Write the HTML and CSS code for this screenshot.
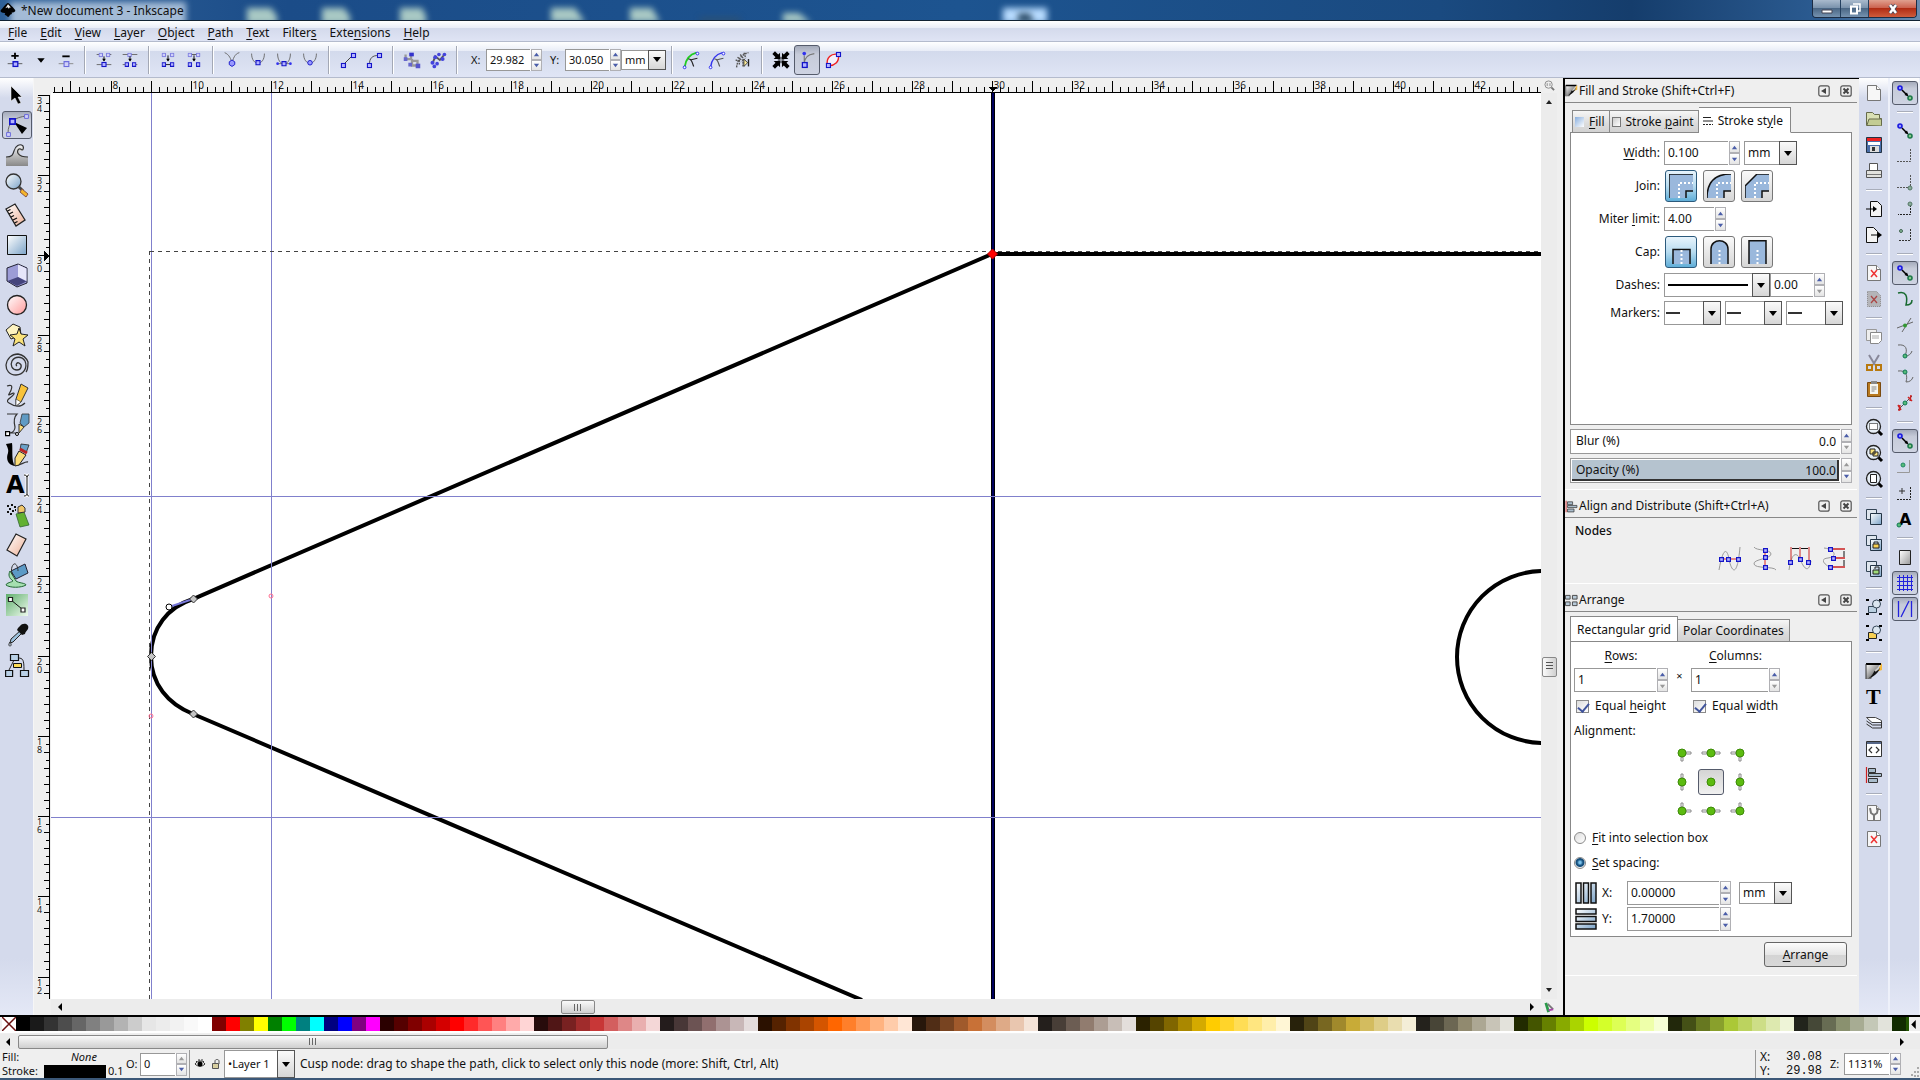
FILE: index.html
```html
<!DOCTYPE html>
<html lang="en">
<head>
  <meta charset="utf-8">
  <title>*New document 3 - Inkscape</title>
  <link rel="stylesheet" href="styles.css">
</head>
<body>
  <!-- shared icon shapes -->
  <svg class="sprite" aria-hidden="true">
    <defs>
      <linearGradient id="blueGrad" x1="0" y1="0" x2="1" y2="1"><stop offset="0" stop-color="#fff"/><stop offset="1" stop-color="#7ba3c8"/></linearGradient>
      <linearGradient id="pinkGrad" x1="0" y1="0" x2="1" y2="1"><stop offset="0" stop-color="#fff"/><stop offset="1" stop-color="#ff9a9a"/></linearGradient>
      <linearGradient id="skinGrad" x1="0" y1="0" x2="1" y2="1"><stop offset="0" stop-color="#fff"/><stop offset="1" stop-color="#eeb096"/></linearGradient>
      <linearGradient id="grayGrad" x1="0" y1="0" x2="0" y2="1"><stop offset="0" stop-color="#eee"/><stop offset="1" stop-color="#888"/></linearGradient>
      <linearGradient id="sheetGrad" x1="0" y1="0" x2="1" y2="1"><stop offset="0" stop-color="#fff"/><stop offset="1" stop-color="#999"/></linearGradient>
      <linearGradient id="greenGrad" x1="0" y1="0" x2="1" y2="1"><stop offset="0" stop-color="#5fae6c"/><stop offset="1" stop-color="#eefaee"/></linearGradient>
      <linearGradient id="inkGrad" x1="0" y1="0" x2="1" y2="1"><stop offset="0" stop-color="#fff"/><stop offset=".5" stop-color="#999"/><stop offset="1" stop-color="#000"/></linearGradient>
    </defs>
    <symbol id="nd" viewBox="0 0 6 6"><path d="M.7.7h4.6v4.6H.7z" fill="#b4b4ff" stroke="#1414c8" stroke-width="1.4"/></symbol>
    <symbol id="ndl" viewBox="0 0 6 6"><path d="M.7.7h4.6v4.6H.7z" fill="#d0d0f8" stroke="#6c6cdc" stroke-width="1.2"/></symbol>
    <symbol id="page" viewBox="0 0 24 24"><path d="M5.5 4.5h9l4 4v11h-13z" fill="#f7f7f7" stroke="#777"/><path d="M14.5 4.5v4h4" fill="#fff" stroke="#777"/></symbol>
    <symbol id="snap" viewBox="0 0 24 24"><circle cx="7" cy="7" r="2" fill="#99f" stroke="#1a1ae0" stroke-width="1.6"/><circle cx="17" cy="17" r="2" fill="#8c8" stroke="#1f7a4c" stroke-width="1.6"/><path d="M9 9l5 5" stroke="#000" stroke-width="1.5"/><path d="M15.5 15.5l-4-1.5 2.5-2.5z"/></symbol>
    <symbol id="lens" viewBox="0 0 24 24"><path d="M15 15l5 5" stroke="#000" stroke-width="3"/><circle cx="11.5" cy="11.5" r="7" fill="#e6eef6" stroke="#222" stroke-width="1.3"/></symbol>
    <symbol id="two" viewBox="0 0 24 24"><path d="M4.5 4.5h10v10h-10z" fill="#dfe6ee" stroke="#345"/><path d="M8.5 8.500h11v11h-11z" fill="url(#blueGrad)" stroke="#234"/></symbol>
    <symbol id="brush" viewBox="0 0 24 24"><path d="M4 5h14L9 20H4z" fill="url(#inkGrad)"/><path d="M4 4h15v2H4z"/><path d="M4 5v15" stroke="#333"/><path d="M20 4v7l-6 2z" fill="#f4b93c"/><path d="M18 9c-2 6-7 9-13 11 5-2 6-6 8-9z" fill="#111"/><path d="M13 12l4-3" stroke="#ccc" stroke-width="2"/></symbol>
    <symbol id="align" viewBox="0 0 24 24"><path d="M4.5 4v16" stroke="#c22" stroke-width="1.2"/><path d="M6.5 5.500h7v4h-7zM6.5 10.500h13v3h-13zM6.5 15.500h9v4h-9z" fill="#a9bccb" stroke="#333"/></symbol>
    <symbol id="up" viewBox="0 0 8 8"><path d="M1 6l3-4 3 4z" fill="currentColor"/></symbol>
    <symbol id="down" viewBox="0 0 8 8"><path d="M1 2l3 4 3-4z" fill="currentColor"/></symbol>
    <symbol id="float" viewBox="0 0 12 12"><rect x=".8" y=".8" width="10.4" height="10.4" rx="2" fill="none" stroke="#555" stroke-width="1.2"/><path d="M3 6l5-3v6z" fill="#444"/></symbol>
    <symbol id="shut" viewBox="0 0 12 12"><rect x=".8" y=".8" width="10.4" height="10.4" rx="2" fill="none" stroke="#555" stroke-width="1.2"/><path d="M3.5 3.5l5 5m0-5l-5 5" stroke="#444" stroke-width="2"/></symbol>
  </svg>

  <header class="titlebar">
    <svg class="desktop" aria-hidden="true">
      <g class="blurred">
        <rect x="10" y="2" width="176" height="24"/>
        <path d="M247 8h24l6 8v8h-30zM322 8h22l6 8v8h-28zM400 8h22l4 8v8h-26zM551 8h24l10 14h-34zM630 8h22l8 14h-30zM783 13h16l12 10h-28z"/>
        <path d="M1003 8h44v15h-44z" fill="#b8dcff"/>
      </g>
      <path class="dim" d="M1018 13h12l4 10h-16zM700 18h40v4h-40z"/>
    </svg>
    <svg class="logo" viewBox="0 0 18 18"><path d="M9 1c1 0 7 6 8 8s-2 3-4 3c1 1 0 2-1 2s-1 2-3 3c-1-1-2-2-4-3 2-1 0-2-2-2s-3-2-2-3 6-8 8-8z"/><path d="M9 2.5l3.5 4-1.5-.5-1 1.5L8.500 6 6 7z" fill="#eee"/></svg>
    <h1>*New document 3 - Inkscape</h1>
    <div class="win-buttons">
      <button aria-label="Minimize"><svg viewBox="0 0 16 12"><path d="M3 7h10v3H3z" fill="#fff" stroke="#445"/></svg></button>
      <button aria-label="Restore"><svg viewBox="0 0 16 12"><path d="M6 1h7v7h-2" fill="none" stroke="#fff" stroke-width="1.5"/><path d="M4 3.5h6v7H4z" fill="none" stroke="#fff" stroke-width="2"/></svg></button>
      <button class="win-close" aria-label="Close"><svg viewBox="0 0 16 12"><path d="M5 2l6 8m0-8l-6 8" stroke="#445" stroke-width="4"/><path d="M5 2l6 8m0-8l-6 8" stroke="#fff" stroke-width="2.5"/></svg></button>
    </div>
  </header>

  <nav class="menubar">
    <a href="#"><u>F</u>ile</a>
    <a href="#"><u>E</u>dit</a>
    <a href="#"><u>V</u>iew</a>
    <a href="#"><u>L</u>ayer</a>
    <a href="#"><u>O</u>bject</a>
    <a href="#"><u>P</u>ath</a>
    <a href="#"><u>T</u>ext</a>
    <a href="#">Filter<u>s</u></a>
    <a href="#">Exte<u>n</u>sions</a>
    <a href="#"><u>H</u>elp</a>
  </nav>

  <div class="toolbar">
    <button aria-label="Insert node"><svg viewBox="0 0 24 24"><path d="M12 4v7M8 7.5h8" stroke="#000" stroke-width="2"/><path d="M4 16h16" stroke="#555"/><use href="#nd" x="9" y="13" width="7" height="7"/></svg></button>
    <button class="drop" aria-label="Insert options"><svg viewBox="0 0 24 24"><path d="M8 10h8l-4 5z"/></svg></button>
    <button aria-label="Delete node"><svg viewBox="0 0 24 24"><path d="M8 8h8" stroke="#000" stroke-width="2"/><path d="M4 16h16" stroke="#888"/><use href="#ndl" x="9" y="13" width="7" height="7"/></svg></button>
    <span class="sep"></span>
    <button aria-label="Join nodes"><svg viewBox="0 0 24 24"><path d="M4 6h3M17 6h3M4 17h16" stroke="#666"/><use href="#ndl" x="6" y="4" width="5" height="5"/><use href="#ndl" x="14" y="4" width="5" height="5"/><use href="#nd" x="9" y="14" width="6" height="6"/><path d="M12 8v5" stroke="#000"/><path d="M10 10.5h4l-2 3z"/></svg></button>
    <button aria-label="Break path"><svg viewBox="0 0 24 24"><path d="M4 6h16M4 17h3M17 17h3" stroke="#666"/><use href="#ndl" x="9" y="4" width="5" height="5"/><use href="#nd" x="6" y="14" width="5" height="6"/><use href="#nd" x="14" y="14" width="5" height="6"/><path d="M12 8v5" stroke="#000"/><path d="M10 10.5h4l-2 3z"/></svg></button>
    <span class="sep"></span>
    <button aria-label="Join with segment"><svg viewBox="0 0 24 24"><path d="M7 17h10" stroke="#111"/><use href="#ndl" x="5" y="4" width="5" height="5"/><use href="#ndl" x="14" y="4" width="5" height="5"/><use href="#nd" x="5" y="14" width="5" height="6"/><use href="#nd" x="14" y="14" width="5" height="6"/><path d="M12 7v6" stroke="#000"/><path d="M10 10.5h4l-2 3z"/></svg></button>
    <button aria-label="Delete segment"><svg viewBox="0 0 24 24"><path d="M7 6h10" stroke="#555"/><use href="#ndl" x="5" y="4" width="5" height="5"/><use href="#ndl" x="14" y="4" width="5" height="5"/><use href="#nd" x="5" y="14" width="5" height="6"/><use href="#nd" x="14" y="14" width="5" height="6"/><path d="M12 7v6" stroke="#000"/><path d="M10 10.5h4l-2 3z"/></svg></button>
    <span class="sep"></span>
    <button aria-label="Cusp"><svg viewBox="0 0 24 24"><path d="M4 4c5 2 7 7 8 12 1-5 3-11 8-12" fill="none" stroke="#666"/><path d="M9 14l3-2 3 2v3l-3 2-3-2z" fill="#99f" stroke="#1414c8"/></svg></button>
    <button aria-label="Smooth"><svg viewBox="0 0 24 24"><path d="M5 5c0 14 14 14 14 0" fill="none" stroke="#666"/><use href="#nd" x="9" y="12" width="6" height="6"/></svg></button>
    <button aria-label="Symmetric"><svg viewBox="0 0 24 24"><path d="M5 5c0 15 14 15 14 0M5 16h14" fill="none" stroke="#666"/><use href="#nd" x="9" y="13" width="6" height="6"/><circle cx="5" cy="16" r="1.5" fill="#33e"/><circle cx="19" cy="16" r="1.5" fill="#33e"/></svg></button>
    <button aria-label="Auto-smooth"><svg viewBox="0 0 24 24"><path d="M5 5c0 14 14 14 14 0" fill="none" stroke="#666"/><circle cx="12" cy="15" r="2.5" fill="#99f" stroke="#1414c8"/></svg></button>
    <span class="sep"></span>
    <button aria-label="Make line"><svg viewBox="0 0 24 24"><path d="M7 17L17 7" stroke="#333"/><use href="#nd" x="4" y="15" width="6" height="6"/><use href="#nd" x="15" y="4" width="6" height="6"/></svg></button>
    <button aria-label="Make curve"><svg viewBox="0 0 24 24"><path d="M7 17C7 10 10 7 17 7" fill="none" stroke="#444"/><use href="#nd" x="4" y="15" width="6" height="6"/><use href="#nd" x="15" y="4" width="6" height="6"/></svg></button>
    <span class="sep"></span>
    <button aria-label="Object to path"><svg viewBox="0 0 24 24"><path d="M5 6v5h7M11 5v6M12 11v7h6v-5h-6" fill="none" stroke="#999" stroke-width="2.5"/><path d="M9 4h5v4H9z" fill="#33c"/><path d="M3 9h4v4H3zM8 15h4v4H8z" fill="#66c"/><path d="M16 16h5v5h-5z" fill="#55c"/></svg></button>
    <button aria-label="Stroke to path"><svg viewBox="0 0 24 24"><path d="M6 16l3-8 5 4 5-6" fill="none" stroke="#555" stroke-width="2"/><g fill="#44d"><circle cx="6" cy="15" r="2.2"/><circle cx="9" cy="9" r="2.2"/><circle cx="13" cy="6" r="2"/><circle cx="19" cy="6" r="2"/><circle cx="17" cy="11" r="2.2"/><circle cx="11" cy="16" r="2"/><circle cx="8" cy="19" r="2"/></g></svg></button>
    <span class="sep"></span>
    <label for="node-x">X:</label>
    <span class="spin"><input id="node-x" type="text" value="29.982"><span class="steps"><button aria-label="Increase X"><svg><use href="#up"/></svg></button><button aria-label="Decrease X"><svg><use href="#down"/></svg></button></span></span>
    <label for="node-y">Y:</label>
    <span class="spin"><input id="node-y" type="text" value="30.050"><span class="steps"><button aria-label="Increase Y"><svg><use href="#up"/></svg></button><button aria-label="Decrease Y"><svg><use href="#down"/></svg></button></span></span>
    <span class="combo unit"><select aria-label="Units"><option>mm</option></select><i></i></span>
    <span class="sep"></span>
    <button aria-label="Edit clip"><svg viewBox="0 0 24 24"><path d="M5 20C6 12 10 6 18 4" fill="none" stroke="#2c2" stroke-width="2"/><path d="M9 11c4-1 4 4 6 8M11 12l8-2" fill="none" stroke="#222" stroke-width="1.2"/><circle cx="5" cy="20" r="1.5" fill="#fff" stroke="#22e"/><circle cx="19" cy="5" r="1.5" fill="#fff" stroke="#22e"/></svg></button>
    <button aria-label="Edit mask"><svg viewBox="0 0 24 24"><path d="M5 20C6 12 10 6 18 4" fill="none" stroke="#33e" stroke-width="1.5"/><path d="M9 11c4-1 4 4 6 8M11 12l8-2" fill="none" stroke="#555" stroke-width="1.2"/><circle cx="5" cy="20" r="1.5" fill="#fff" stroke="#22e"/><circle cx="19" cy="5" r="1.5" fill="#fff" stroke="#22e"/></svg></button>
    <button aria-label="Edit path effect"><svg viewBox="0 0 24 24"><path d="M5 20C6 12 10 6 18 4M4 12l6 2M6 9l6 4M9 6l4 5M13 4l2 6M8 12v6M12 11v8" fill="none" stroke="#555" stroke-width="1.5" stroke-dasharray="2 1"/><path d="M13 11v8l4-4z" fill="#fe9" stroke="#333"/><path d="M18 11v8" stroke="#222" stroke-width="1.5"/></svg></button>
    <span class="sep"></span>
    <button aria-label="Show transform handles"><svg viewBox="0 0 24 24"><path d="M4 4l16 16M20 4L4 20" stroke="#000" stroke-width="4"/><path d="M11 4v7H4zM13 4v7h7zM11 20v-7H4zM13 20v-7h7z"/><path d="M12 4v16M4 12h16" stroke="#d8deef"/></svg></button>
    <button class="active" aria-label="Show handles"><svg viewBox="0 0 24 24"><path d="M9 7v9M9 16c0-6 4-10 11-11" fill="none" stroke="#777" stroke-width="1.2"/><circle cx="9" cy="5" r="2" fill="#33e"/><use href="#nd" x="6" y="14" width="7" height="7"/></svg></button>
    <button aria-label="Show outline"><svg viewBox="0 0 24 24"><path d="M6 18C4 10 10 4 18 6c1 8-4 13-12 12z" fill="#f4f0fa" stroke="#e22" stroke-width="1.5"/><use href="#nd" x="4" y="15" width="6" height="6"/><use href="#nd" x="15" y="3" width="6" height="6"/></svg></button>
  </div>

  <main class="workspace">
    <div class="toolbox">
      <button aria-label="Select"><svg viewBox="0 0 24 24"><path d="M6 3v15l4-3 3 6 3-1-3-6h4z" stroke="#fff" stroke-width=".5"/></svg></button>
      <button class="active" aria-label="Edit nodes"><svg viewBox="0 0 24 24"><path d="M3 20C3 10 9 4 22 3" fill="none" stroke="#666"/><path d="M9 9l13 6-5 6z"/><use href="#nd" x="4" y="5" width="7" height="7"/><use href="#ndl" x="1" y="19" width="5" height="5"/><use href="#ndl" x="19" y="1" width="5" height="5"/></svg></button>
      <button aria-label="Tweak"><svg viewBox="0 0 24 24"><path d="M1 14c6 0 8-1 9-6 1-4 6-7 8-4 2 2 0 5-2 4-3 0-2 6 7 6v9H1z" fill="url(#grayGrad)"/><path d="M1 14c6 0 7-2 8-6 1-5 6-8 9-5 1 2 0 4-1 4s-1-2-3-1c-3 2-2 8 9 8" fill="none" stroke="#333" stroke-width="1.2"/></svg></button>
      <button aria-label="Zoom"><svg viewBox="0 0 24 24"><path d="M14 14l4 4" stroke="#444" stroke-width="3"/><path d="M17 16l6 5-2 3-6-5z" fill="#f6b62a" stroke="#854"/><circle cx="8.5" cy="8.5" r="7.5" fill="url(#blueGrad)" stroke="#333" stroke-width="1.3"/></svg></button>
      <button aria-label="Measure"><svg viewBox="0 0 24 24"><path d="M1 6l9-5 10 16-9 6z" fill="url(#skinGrad)" stroke="#222" stroke-width="1.3"/><path d="M2.5 8l3-1.500M4 11l4-2M6 14l3-1.500M8 17l4-2M9.500 20l3-1.500" stroke="#111" stroke-width="1.3"/></svg></button>
      <button aria-label="Rectangle"><svg viewBox="0 0 24 24"><path d="M2.5 2.5h19v19h-19z" fill="url(#blueGrad)" stroke="#111"/></svg></button>
      <button aria-label="3D box"><svg viewBox="0 0 24 24"><path d="M2 5l11-4 9 4v15l-10 4-10-6z" fill="#9c9cd6" stroke="#223"/><path d="M13 1.500l8.500 4V18L13 14z" fill="#e6e6fa"/><path d="M2.500 18l10.500-4 8.500 4.500L12 23z" fill="#44447c"/></svg></button>
      <button aria-label="Ellipse"><svg viewBox="0 0 24 24"><circle cx="12" cy="12" r="9.5" fill="url(#pinkGrad)" stroke="#222" stroke-width="1.3"/></svg></button>
      <button aria-label="Star"><svg viewBox="0 0 24 24"><path d="M1 7l7-6 7 3 1 8-10 4z" fill="#fdf3c0" stroke="#222"/><path d="M14 5l2 6 7 1-5 4 2 7-6-4-6 4 2-7-5-4 7-1z" fill="#fae27a" stroke="#222"/></svg></button>
      <button aria-label="Spiral"><svg viewBox="0 0 24 24"><path d="M12 13c-2-1 0-4 2-3 4 2 2 7-2 7-5 0-7-5-5-9 3-5 10-5 13 0 3 7-2 14-9 14C4 22 1 17 1 12 2 5 7 1 13 1c5 1 8 3 10 8 0 4 0 8-2 10" fill="none" stroke="#333" stroke-width="1.3"/></svg></button>
      <button aria-label="Pencil"><svg viewBox="0 0 24 24"><path d="M2 3c8-3 4 5 2 8s6-3 5 0c-2 4-10 6-5 9 6 4 12 4 16 0" fill="none" stroke="#333" stroke-width="1.2"/><path d="M16 1l7 4-7 14-5 4 0-7z" fill="#f8c33a" stroke="#333"/><path d="M11 16l5 3-5 4z" fill="#fff" stroke="#333" stroke-width=".6"/></svg></button>
      <button aria-label="Bezier"><svg viewBox="0 0 24 24"><path d="M2 1h10C8 5 9 10 10 14c0 3-2 6-6 6h8" fill="none" stroke="#333" stroke-width="1.2"/><path d="M17 1h7v9l-5 4-4-4z" fill="#5f9ac4" stroke="#333" stroke-width=".8"/><path d="M14 11l5 3-5 6z" fill="#fbdc77" stroke="#333"/><path d="M.6 18.6h4v4h-4z" fill="#fff" stroke="#000" stroke-width="1.2"/><circle cx="12" cy="21" r="1.5" fill="#fff" stroke="#000"/></svg></button>
      <button aria-label="Calligraphy"><svg viewBox="0 0 24 24"><path d="M1 1l6-1c1 6-1 18 3 23-8-1-9-8-7-13 1-4-1-6-2-9z"/><path d="M8 22c7 2 11-4 15-3" fill="none" stroke="#333" stroke-width="1.3"/><path d="M14 8l7 4-7 10-4 1v-8z" fill="#fbdc77" stroke="#222"/><path d="M16 1l8 1-3 8-6-3z" fill="#6aa0c8" stroke="#222" stroke-width=".8"/><path d="M15 6l7 4" stroke="#b22" stroke-width="3"/></svg></button>
      <button aria-label="Text"><svg viewBox="0 0 24 24"><text x="1" y="20" class="glyph">A</text><path d="M19 2c2 0 3 1 3 2 0-1 1-2 2-2M22 3v18m0 0c0 1-1 2-3 2m3-2c0 1 1 2 2 2" fill="none" stroke="#fff" stroke-width="3"/><path d="M19 2c2 0 3 1 3 2 0-1 1-2 2-2M22 3v18m0 0c0 1-1 2-3 2m3-2c0 1 1 2 2 2" fill="none" stroke="#111"/></svg></button>
      <button aria-label="Spray"><svg viewBox="0 0 24 24"><path d="M11 11l8-2 5 13-9 2z" fill="#62b132" stroke="#363" stroke-width=".8"/><path d="M13 4l4-2 3 3v4l-7 1z" fill="#f0c66a" stroke="#333"/><path d="M2 3h2M6 2h2M4 6h2M9 4h2M2 9h2M7 8h2M10 7h1M5 11h2" stroke="#111" stroke-width="1.8"/></svg></button>
      <button aria-label="Eraser"><svg viewBox="0 0 24 24"><path d="M11 1l10 5-9 17-10-6z" fill="url(#skinGrad)" stroke="#222" stroke-width="1.2"/></svg></button>
      <button aria-label="Fill bounded area"><svg viewBox="0 0 24 24"><path d="M5 8c-2 4-1 7 3 10-1 1-7 2-7 4 4 3 15 3 20 0 0-2-8-2-10-4z" fill="#a5dfb0" stroke="#263"/><path d="M6 8l14-7 3 9-12 6z" fill="#5c9ac6" stroke="#223"/><path d="M8 12C5 8 7 2 9 1s4 3 4 7" fill="none" stroke="#333"/></svg></button>
      <button aria-label="Gradient"><svg viewBox="0 0 24 24"><path d="M1 1h22v22H1z" fill="url(#greenGrad)"/><path d="M6 7l11 9" stroke="#111"/><path d="M3.5 4.5h4v4h-4zM16 15h4v4h-4z" fill="#fff" stroke="#222" stroke-width="1.2"/></svg></button>
      <button aria-label="Dropper"><svg viewBox="0 0 24 24"><path d="M16 7l2 2L8 19l-3 1 1-4z" fill="#9cc0dc" stroke="#222"/><path d="M15 3c3-4 10-2 8 3-1 2-3 3-3 5l-3 1-5-5 1-2z" fill="#111"/><path d="M5 19c-2 3-1 4 0 4s2-1 0-4" fill="#bcd" stroke="#333"/></svg></button>
      <button aria-label="Connector"><svg viewBox="0 0 24 24"><path d="M9 7L4 17M13 5c5 0 6 2 6 12" fill="none" stroke="#222"/><path d="M5.5 1.500h8v6h-8zM.6 17.500h7v6h-7zM15.500 17.500h8v6h-8z" fill="#b9d0e6" stroke="#111" stroke-width="1.2"/><path d="M8.5 10.500h8v4h-8z" fill="#fbdc55" stroke="#111"/></svg></button>
    </div>

    <section class="editor">
      <svg class="ruler ruler-x" id="ruler-x"></svg>
      <button class="corner" aria-label="Zoom on resize"><svg viewBox="0 0 12 12"><path d="M8 8l3 3" stroke="#777" stroke-width="2"/><circle cx="5" cy="5" r="4" fill="#eee" stroke="#888"/><path d="M3.5 3.5v3M6.5 3.500v3" stroke="#888"/></svg></button>
      <svg class="ruler ruler-y" id="ruler-y"></svg>
      <svg class="canvas" role="img" aria-label="Drawing">
        <g transform="translate(-51 -93)" fill="none">
          <path d="M862 1000L193 714C168 704 151 684 151 656S168 607 193 599L992 254H2600" stroke="#000" stroke-width="4"/>
          <circle cx="1543" cy="657" r="86" stroke="#000" stroke-width="4"/>
          <path d="M993 93v2000" stroke="#000" stroke-width="4"/>
          <path d="M993 93v2000" stroke="#00005e" stroke-width="2"/>
          <path class="guide" d="M151.500 93v2000M271.500 93v2000M51 496.500h2500M51 817.500h2500"/>
          <path d="M150 251.500h2400M149.500 251v2000" stroke="#444" stroke-dasharray="4 4"/>
          <path d="M169 607l24-8" stroke="#7878d8" stroke-width="2"/>
          <circle cx="169" cy="607" r="3" fill="#fff" stroke="#000"/>
          <g fill="#c4c4c4" stroke="#333">
            <path d="M193.500 595l4 4-4 4-4-4zM151.500 652.500l4 4-4 4-4-4zM193.500 710l4 4-4 4-4-4z"/>
          </g>
          <path d="M992.500 249l5 5-5 5-5-5z" fill="#f00" stroke="#b00"/>
          <g stroke="#ff6f90"><circle cx="271" cy="596" r="2"/><circle cx="151" cy="716" r="2"/></g>
        </g>
      </svg>
      <div class="vscroll"><svg><use href="#up"/></svg><span class="thumb"></span><svg><use href="#down"/></svg></div>
      <div class="hscroll"><svg viewBox="0 0 8 8"><path d="M6 0v8L2 4z"/></svg><span class="thumb"></span><svg viewBox="0 0 8 8"><path d="M2 0v8l4-4z"/></svg></div>
      <button class="corner" aria-label="Color managed view"><svg viewBox="0 0 12 12"><path d="M2 1l3 10" stroke="#2a9a4a" stroke-width="3"/><path d="M4 2l6 6" stroke="#777" stroke-width="2"/><path d="M5 9l5-1" stroke="#a4a" stroke-width="2"/></svg></button>
    </section>

    <aside class="dock">
      <section class="panel">
        <header><svg viewBox="3 3 18 18"><use href="#brush" width="24" height="24"/></svg><h2>Fill and Stroke (Shift+Ctrl+F)</h2><button aria-label="Iconify"><svg><use href="#float"/></svg></button><button aria-label="Close panel"><svg><use href="#shut"/></svg></button></header>
        <div class="panel-body">
          <div class="tabs stroke-tabs">
            <button><i class="fill-chip"></i><span><u>F</u>ill</span></button>
            <button><i class="paint-chip"></i><span>Stroke <u>p</u>aint</span></button>
            <button class="current"><svg viewBox="0 0 10 10"><path d="M0 1.5h8M0 5h10" stroke="#222"/><path d="M0 8.5h10" stroke="#222" stroke-dasharray="2 1"/></svg><span>Stroke st<u>y</u>le</span></button>
          </div>
          <div class="sheet stroke-style">
            <label for="sw"><u>W</u>idth:</label>
            <div class="row"><span class="spin w64"><input id="sw" type="text" value="0.100"><span class="steps"><button aria-label="Wider"><svg><use href="#up"/></svg></button><button aria-label="Narrower"><svg><use href="#down"/></svg></button></span></span><span class="combo w53"><select aria-label="Width units"><option>mm</option></select><i></i></span></div>
            <span class="name">Join:</span>
            <div class="row shapes">
              <button class="on" aria-label="Miter join"><svg viewBox="0 0 24 24"><path d="M0 0h24v17h-7v7H0z" fill="#9ab8dc"/><path d="M0 24V0h24M17 24v-7h7" fill="none" stroke="#111" stroke-width="1.5"/><path d="M10 24V9h14" fill="none" stroke="#fff" stroke-width="2" stroke-dasharray="2 2"/></svg></button>
              <button aria-label="Round join"><svg viewBox="0 0 24 24"><path d="M0 24C0 8 8 0 24 0v17h-7v7z" fill="#9ab8dc"/><path d="M0 24C0 8 8 0 24 0M17 24v-7h7" fill="none" stroke="#111" stroke-width="1.5"/><path d="M10 24V9h14" fill="none" stroke="#fff" stroke-width="2" stroke-dasharray="2 2"/></svg></button>
              <button aria-label="Bevel join"><svg viewBox="0 0 24 24"><path d="M0 24V12L12 0h12v17h-7v7z" fill="#9ab8dc"/><path d="M0 24V12L12 0h12M17 24v-7h7" fill="none" stroke="#111" stroke-width="1.5"/><path d="M10 24V9h14" fill="none" stroke="#fff" stroke-width="2" stroke-dasharray="2 2"/></svg></button>
            </div>
            <label for="ml">Miter <u>l</u>imit:</label>
            <div class="row"><span class="spin w50"><input id="ml" type="text" value="4.00"><span class="steps"><button aria-label="Raise limit"><svg><use href="#up"/></svg></button><button aria-label="Lower limit"><svg><use href="#down"/></svg></button></span></span></div>
            <span class="name">Cap:</span>
            <div class="row shapes">
              <button class="on" aria-label="Butt cap"><svg viewBox="0 0 24 24"><path d="M4 24V9.5h17V24" fill="#9ab8dc" stroke="#111" stroke-width="1.5"/><path d="M12.5 10v14" stroke="#fff" stroke-width="2" stroke-dasharray="2 2"/></svg></button>
              <button aria-label="Round cap"><svg viewBox="0 0 24 24"><path d="M4 24V9c0-11 17-11 17 0v15" fill="#9ab8dc" stroke="#111" stroke-width="1.5"/><path d="M12.5 10v14" stroke="#fff" stroke-width="2" stroke-dasharray="2 2"/></svg></button>
              <button aria-label="Square cap"><svg viewBox="0 0 24 24"><path d="M4 24V.8h17V24" fill="#9ab8dc" stroke="#111" stroke-width="1.5"/><path d="M12.5 10v14" stroke="#fff" stroke-width="2" stroke-dasharray="2 2"/></svg></button>
            </div>
            <label for="dash">Dashes:</label>
            <div class="row tight"><span class="combo line long w106"><select id="dash"><option label=" "></option></select><i></i></span><span class="spin w43"><input type="text" value="0.00" aria-label="Dash offset"><span class="steps"><button aria-label="More offset"><svg><use href="#up"/></svg></button><button class="off" aria-label="Less offset"><svg><use href="#down"/></svg></button></span></span></div>
            <label for="mk">Markers:</label>
            <div class="row markers"><span class="combo line"><select id="mk"><option label=" "></option></select><i></i></span><span class="combo line"><select aria-label="Mid marker"><option label=" "></option></select><i></i></span><span class="combo line"><select aria-label="End marker"><option label=" "></option></select><i></i></span></div>
          </div>
          <div class="spin slider"><label for="blur">Blur (%)</label><input id="blur" type="text" value="0.0"><span class="steps"><button aria-label="More blur"><svg><use href="#up"/></svg></button><button class="off" aria-label="Less blur"><svg><use href="#down"/></svg></button></span></div>
          <div class="spin slider full"><label for="opac">Opacity (%)</label><input id="opac" type="text" value="100.0"><span class="steps"><button class="off" aria-label="More opacity"><svg><use href="#up"/></svg></button><button aria-label="Less opacity"><svg><use href="#down"/></svg></button></span></div>
        </div>
      </section>

      <section class="panel">
        <header><svg viewBox="3 3 18 18"><use href="#align" width="24" height="24"/></svg><h2>Align and Distribute (Shift+Ctrl+A)</h2><button aria-label="Iconify"><svg><use href="#float"/></svg></button><button aria-label="Close panel"><svg><use href="#shut"/></svg></button></header>
        <div class="panel-body nodes">
          <h3>Nodes</h3>
          <div class="node-buttons">
            <button aria-label="Align horizontally"><svg viewBox="0 0 24 24"><path d="M1 23C5 0 9 1 11 12s8 22 11-12" fill="none" stroke="#999"/><path d="M3 12h18" stroke="#d22"/><use href="#nd" x="1" y="10" width="5" height="5"/><use href="#nd" x="8" y="10" width="5" height="5"/><use href="#nd" x="18" y="10" width="5" height="5"/></svg></button>
            <button aria-label="Align vertically"><svg viewBox="0 0 24 24"><path d="M1 0c2 4 17 2 17 7S0 12 1 17s20 2 22 6" fill="none" stroke="#999"/><path d="M12 3v18" stroke="#d22"/><use href="#nd" x="10" y="1" width="5" height="5"/><use href="#nd" x="10" y="8" width="5" height="5"/><use href="#nd" x="10" y="18" width="5" height="5"/></svg></button>
            <button aria-label="Distribute horizontally"><svg viewBox="0 0 24 24"><path d="M1 23C4 2 10 7 12 12s8 18 11 2" fill="none" stroke="#999"/><path d="M3 15V0M12 12V0M21 15V0" stroke="#c22"/><path d="M4 1.5h7M13 1.500h7" stroke="#111"/><use href="#nd" x="0" y="13" width="5" height="5"/><use href="#nd" x="10" y="10" width="5" height="5"/><use href="#nd" x="18" y="13" width="5" height="5"/></svg></button>
            <button aria-label="Distribute vertically"><svg viewBox="0 0 24 24"><path d="M1 1c11 1 14 9 4 10s-2 8 5 11" fill="none" stroke="#999"/><path d="M7 2h15M10 11h12M7 20h15" stroke="#c22" stroke-width="1.3"/><path d="M21 4v6M21 13v6" stroke="#111"/><use href="#nd" x="5" y="0" width="5" height="5"/><use href="#nd" x="8" y="9" width="5" height="5"/><use href="#nd" x="5" y="18" width="5" height="5"/></svg></button>
          </div>
        </div>
      </section>

      <section class="panel">
        <header><svg viewBox="0 0 14 14"><path d="M.5 1.5h5v4h-5zM8 1.500h5v4H8zM.5 8.500h5v4h-5zM8 8.500h5v4H8z" fill="#b8cad8" stroke="#444"/></svg><h2>Arrange</h2><button aria-label="Iconify"><svg><use href="#float"/></svg></button><button aria-label="Close panel"><svg><use href="#shut"/></svg></button></header>
        <div class="panel-body arrange">
          <div class="tabs">
            <button class="current">Rectangular grid</button>
            <button>Polar Coordinates</button>
          </div>
          <div class="sheet">
            <div class="counts">
              <label for="rows"><u>R</u>ows:</label><span></span><label for="cols"><u>C</u>olumns:</label>
              <span class="spin"><input id="rows" type="text" value="1"><span class="steps"><button aria-label="More rows"><svg><use href="#up"/></svg></button><button class="off" aria-label="Fewer rows"><svg><use href="#down"/></svg></button></span></span>
              <span class="times">×</span>
              <span class="spin"><input id="cols" type="text" value="1"><span class="steps"><button aria-label="More columns"><svg><use href="#up"/></svg></button><button class="off" aria-label="Fewer columns"><svg><use href="#down"/></svg></button></span></span>
              <label class="choice"><input type="checkbox" checked><span>Equal <u>h</u>eight</span></label><span></span>
              <label class="choice"><input type="checkbox" checked><span>Equal <u>w</u>idth</span></label>
            </div>
            <p class="alignment">Alignment:</p>
            <div class="anchors" id="anchors"></div>
            <label class="choice radio"><input type="radio" name="fit"><span><u>F</u>it into selection box</span></label>
            <label class="choice radio"><input type="radio" name="fit" checked><span><u>S</u>et spacing:</span></label>
            <div class="spacing">
              <svg viewBox="0 0 22 22"><path d="M1 1h5v20H1zM8.500 1h5v20h-5zM16 1h5v20h-5z" fill="url(#blueGrad)" stroke="#111" stroke-width="1.5"/></svg>
              <label for="gx">X:</label>
              <span class="spin"><input id="gx" type="text" value="0.00000"><span class="steps"><button aria-label="More X"><svg><use href="#up"/></svg></button><button aria-label="Less X"><svg><use href="#down"/></svg></button></span></span>
              <span class="combo w53"><select aria-label="Spacing units"><option>mm</option></select><i></i></span>
              <svg viewBox="0 0 22 22"><path d="M1 1h20v5H1zM1 8.500h20v5H1zM1 16h20v5H1z" fill="url(#blueGrad)" stroke="#111" stroke-width="1.5"/></svg>
              <label for="gy">Y:</label>
              <span class="spin"><input id="gy" type="text" value="1.70000"><span class="steps"><button aria-label="More Y"><svg><use href="#up"/></svg></button><button aria-label="Less Y"><svg><use href="#down"/></svg></button></span></span>
            </div>
          </div>
          <button class="push"><u>A</u>rrange</button>
        </div>
      </section>
    </aside>

    <div class="sidebar">
      <button aria-label="New"><svg viewBox="0 0 24 24"><use href="#page"/></svg></button>
      <button aria-label="Open"><svg viewBox="0 0 24 24"><path d="M4.5 18.5v-13h6l2 2h5v4h2v7z" fill="#d9e0b4" stroke="#666b4a"/><path d="M5 18l2-6h12.500v6.500" fill="#c3cc94" stroke="#666b4a"/></svg></button>
      <button aria-label="Save"><svg viewBox="0 0 24 24"><path d="M4.5 4.5h15v15h-15z" fill="#4a6ea8" stroke="#234"/><path d="M5 5h14v3H5z" fill="#e22"/><path d="M6 9h12v3H6z" fill="#fff"/><path d="M8 13h9v6H8z" fill="#ddd"/><path d="M10 14h3v4h-3z" fill="#333"/></svg></button>
      <button aria-label="Print"><svg viewBox="0 0 24 24"><path d="M7.5 4.5h8v7h-8z" fill="#fff" stroke="#555"/><path d="M4.5 11.500h15v7h-15z" fill="#e2e2de" stroke="#555"/><path d="M5 15.500h14" stroke="#777"/></svg></button>
      <hr>
      <button aria-label="Import"><svg viewBox="0 0 24 24"><path d="M8.5 4.5h7l4 4v11h-11z" fill="#f4f4f4" stroke="#111"/><path d="M4 12h9" stroke="#000"/><path d="M11 9l4 3-4 3z"/></svg></button>
      <button aria-label="Export"><svg viewBox="0 0 24 24"><path d="M4.5 4.5h7l4 4v11h-11z" fill="#f4f4f4" stroke="#111"/><path d="M9 12h9" stroke="#000"/><path d="M16 9l4 3-4 3z"/></svg></button>
      <hr>
      <button aria-label="Undo"><svg viewBox="0 0 24 24"><use href="#page"/><path d="M9 9l6 7m0-7l-6 7" stroke="#e33" stroke-width="1.5"/></svg></button>
      <button aria-label="Redo"><svg viewBox="0 0 24 24"><path d="M5.5 4.5h9l4 4v11h-13z" fill="#b4b4b8" stroke="#888" stroke-dasharray="1 1"/><path d="M9 9l6 7m0-7l-6 7" stroke="#a44" stroke-width="1.2"/></svg></button>
      <hr>
      <button aria-label="Copy"><svg viewBox="0 0 24 24"><path d="M4.5 4.5h10v11h-10z" fill="#eee" stroke="#999"/><path d="M8.5 7.500h11v8l-3 3h-8z" fill="#fff" stroke="#888"/><path d="M10 11h7M10 13h7" stroke="#aaa"/></svg></button>
      <button aria-label="Cut"><svg viewBox="0 0 24 24"><path d="M7 4l6 10M17 4l-6 10" stroke="#889" stroke-width="2"/><path d="M5 14h5v5H5zM14 14h5v5h-5z" fill="none" stroke="#b8790f" stroke-width="2"/></svg></button>
      <button aria-label="Paste"><svg viewBox="0 0 24 24"><path d="M5.5 5.5h13v14h-13z" fill="#b8791f" stroke="#7a4a10"/><path d="M8 7h8v10H8z" fill="#f5f5f0"/><path d="M9 4h6v3H9z" fill="#888"/><path d="M9.5 10h5M9.500 12h5M9.500 14h3" stroke="#888"/></svg></button>
      <hr>
      <button aria-label="Zoom selection"><svg viewBox="0 0 24 24"><use href="#lens"/><path d="M7.5 8.5h8v6h-8z" fill="#fff" stroke="#000" stroke-dasharray="1 1"/></svg></button>
      <button aria-label="Zoom drawing"><svg viewBox="0 0 24 24"><use href="#lens"/><path d="M8 8h5v5H8zM11 11h5v4h-5z" fill="#fbe27a" stroke="#222"/></svg></button>
      <button aria-label="Zoom page"><svg viewBox="0 0 24 24"><use href="#lens"/><path d="M8.5 7.5h6v8h-6z" fill="#fff" stroke="#222"/></svg></button>
      <hr>
      <button aria-label="Duplicate"><svg viewBox="0 0 24 24"><use href="#two"/></svg></button>
      <button aria-label="Clone"><svg viewBox="0 0 24 24"><use href="#two"/><path d="M12 14v-3h4v3" fill="none" stroke="#222"/><path d="M11 13h6v4h-6z" fill="#f7d052" stroke="#222"/></svg></button>
      <button aria-label="Unlink clone"><svg viewBox="0 0 24 24"><use href="#two"/><path d="M13 12v-2h4v3" fill="none" stroke="#222"/><path d="M11 13h6v4h-6z" fill="#9fdc7a" stroke="#222"/></svg></button>
      <hr>
      <button aria-label="Group"><svg viewBox="0 0 24 24"><path d="M4 4h3v2H4zM17 4h3v2h-3zM4 18h3v2H4zM17 18h3v2h-3z"/><path d="M6.5 11.500h8v6h-8z" fill="#b9cfe0" stroke="#345"/><circle cx="14.5" cy="9" r="4" fill="#dbe6f0" stroke="#345"/></svg></button>
      <button aria-label="Ungroup"><svg viewBox="0 0 24 24"><path d="M4 4h3v2H4zM17 4h3v2h-3zM4 18h3v2H4zM17 18h3v2h-3z"/><path d="M6.5 11.500h8v6h-8z" fill="#f7d052" stroke="#222"/><circle cx="14.5" cy="9" r="4" fill="#dbe6f0" stroke="#345"/></svg></button>
      <hr>
      <button aria-label="Fill and stroke"><svg viewBox="0 0 24 24"><use href="#brush"/></svg></button>
      <button aria-label="Text and font"><svg viewBox="0 0 24 24"><text x="4" y="19" class="glyph serif">T</text></svg></button>
      <button aria-label="Layers"><svg viewBox="0 0 24 24"><path d="M4.5 6.500h9l6 3v2H10z" fill="#fff" stroke="#444"/><path d="M4.500 10l6 4h9v-3M4.500 13l6 4h9v-3" fill="none" stroke="#333"/></svg></button>
      <button aria-label="XML editor"><svg viewBox="0 0 24 24"><path d="M4.5 4.5h15v15h-15z" fill="#fff" stroke="#333"/><path d="M5 6h14" stroke="#568" stroke-width="2"/><path d="M10 10l-3 3 3 3M14 10l3 3-3 3" fill="none" stroke="#333" stroke-width="1.2"/></svg></button>
      <button aria-label="Align"><svg viewBox="0 0 24 24"><use href="#align"/></svg></button>
      <hr>
      <button aria-label="Preferences"><svg viewBox="0 0 24 24"><use href="#page"/><path d="M8 7l1 5 3 2 3-2 1-5M12 13v6" fill="none" stroke="#777" stroke-width="2"/></svg></button>
      <button aria-label="Document properties"><svg viewBox="0 0 24 24"><use href="#page"/><path d="M9 9l6 7m0-7l-6 7" stroke="#e33" stroke-width="1.5"/></svg></button>
    </div>

    <div class="sidebar snapbar">
      <button class="active" aria-label="Snap"><svg viewBox="0 0 24 24"><use href="#snap"/></svg></button>
      <hr>
      <button aria-label="Snap bounding box"><svg viewBox="0 0 24 24"><use href="#snap"/></svg></button>
      <button aria-label="Snap edges"><svg viewBox="0 0 24 24"><path d="M17.5 4v12.500H4" fill="none" stroke="#555" stroke-dasharray="2 1"/></svg></button>
      <button aria-label="Snap corners"><svg viewBox="0 0 24 24"><path d="M17.5 4v12.500H4" fill="none" stroke="#555" stroke-dasharray="2 1"/><circle cx="17" cy="17" r="2" fill="#8a9" stroke="#576"/></svg></button>
      <button aria-label="Snap edge midpoints"><svg viewBox="0 0 24 24"><path d="M17.5 8v9.500H5" fill="none" stroke="#222" stroke-dasharray="2 1"/><circle cx="17" cy="7" r="2" fill="#8a9" stroke="#576"/></svg></button>
      <button aria-label="Snap box centers"><svg viewBox="0 0 24 24"><path d="M17.5 6v11.500H5" fill="none" stroke="#333" stroke-dasharray="2 1"/><circle cx="8" cy="8" r="1.5" fill="#8b9" stroke="#465"/></svg></button>
      <hr>
      <button class="active" aria-label="Snap nodes"><svg viewBox="0 0 24 24"><use href="#snap"/></svg></button>
      <button aria-label="Snap paths"><svg viewBox="0 0 24 24"><path d="M5 6c8-2 10 3 8 12 4 0 6-2 6-5" fill="none" stroke="#186a30" stroke-width="1.5"/></svg></button>
      <button aria-label="Snap intersections"><svg viewBox="0 0 24 24"><path d="M4 15l16-6M9 19L18 5" stroke="#666"/><circle cx="12" cy="12.5" r="2" fill="#393"/></svg></button>
      <button aria-label="Snap cusp nodes"><svg viewBox="0 0 24 24"><path d="M5 6c8-1 10 4 7 11 4 0 6-2 7-5" fill="none" stroke="#666"/><circle cx="12" cy="17" r="2" fill="#5b7" stroke="#175"/></svg></button>
      <button aria-label="Snap smooth nodes"><svg viewBox="0 0 24 24"><path d="M5 6c8-1 10 4 8 11 4 0 6-2 7-5" fill="none" stroke="#666"/><circle cx="12" cy="7" r="2" fill="#5b7" stroke="#175"/></svg></button>
      <button aria-label="Snap midpoints"><svg viewBox="0 0 24 24"><path d="M5 19L19 5" stroke="#555"/><path d="M5 14l3 5M7 14l-1 6M15 6l4 4M18 4l-1 6" stroke="#c22" stroke-width="1.5"/><circle cx="12" cy="12" r="2" fill="#5b7" stroke="#175"/></svg></button>
      <hr>
      <button class="active" aria-label="Snap others"><svg viewBox="0 0 24 24"><use href="#snap"/></svg></button>
      <button aria-label="Snap object centers"><svg viewBox="0 0 24 24"><path d="M16.5 5v12.500H4" fill="none" stroke="#999"/><circle cx="10" cy="10" r="2" fill="#5b7" stroke="#286"/></svg></button>
      <button aria-label="Snap rotation centers"><svg viewBox="0 0 24 24"><path d="M17.5 6v12.500H4" fill="none" stroke="#222" stroke-dasharray="2 1"/><path d="M6 10h6M9 7v6" stroke="#333"/></svg></button>
      <button aria-label="Snap text baseline"><svg viewBox="0 0 24 24"><text x="6" y="18" class="glyph small">A</text><circle cx="6" cy="18" r="2" fill="#5b7" stroke="#175"/></svg></button>
      <hr>
      <button aria-label="Snap page border"><svg viewBox="0 0 24 24"><path d="M6.5 5.5h11v14h-11z" fill="url(#sheetGrad)" stroke="#222"/></svg></button>
      <button class="active" aria-label="Snap grids"><svg viewBox="0 0 24 24"><path d="M6.5 4v16M10.500 4v16M14.500 4v16M18.500 4v16M4 6.500h16M4 10.500h16M4 14.500h16M4 18.500h16" stroke="#2222dd"/></svg></button>
      <button class="active" aria-label="Snap guides"><svg viewBox="0 0 24 24"><path d="M5.5 4v16M18.500 4v16M8 20l8-16" stroke="#2222dd" stroke-width="1.3"/></svg></button>
    </div>
  </main>

  <div class="palette">
    <div class="swatches" id="swatches"></div>
    <button class="palette-menu" aria-label="Palette menu"><svg viewBox="0 0 8 8"><path d="M6 0v8L2 4z"/></svg></button>
  </div>
  <div class="hscroll palette-scroll"><svg viewBox="0 0 8 8"><path d="M6 0v8L2 4z"/></svg><span class="thumb"></span><svg viewBox="0 0 8 8"><path d="M2 0v8l4-4z"/></svg></div>

  <footer class="statusbar">
    <div class="style-now">
      <span>Fill:</span><em>None</em><span></span>
      <span>Stroke:</span><span class="ink"></span><span>0.1</span>
    </div>
    <label for="obj-o">O:</label>
    <span class="spin"><input id="obj-o" type="text" value="0"><span class="steps"><button class="off" aria-label="Raise opacity"><svg><use href="#up"/></svg></button><button aria-label="Lower opacity"><svg><use href="#down"/></svg></button></span></span>
    <span class="bar"></span>
    <button aria-label="Layer visibility"><svg viewBox="0 0 12 12"><path d="M1 6c3-4 7-4 10 0-3 3-7 3-10 0z" fill="none" stroke="#333"/><circle cx="6" cy="6" r="2.5"/><path d="M2 3l1 1M5 1v2M8 1v2M10 3L9 4" stroke="#333"/></svg></button>
    <button aria-label="Layer lock"><svg viewBox="0 0 12 12"><path d="M5 6V3c0-2 4-2 4 0v3" fill="none" stroke="#555"/><path d="M2.5 5.5h6v5h-6z" fill="#d8cfa0" stroke="#555"/></svg></button>
    <span class="combo layer"><select aria-label="Layer"><option>•Layer 1</option></select><i></i></span>
    <p>Cusp node: drag to shape the path, click to select only this node (more: Shift, Ctrl, Alt)</p>
    <div class="coords"><span>X:</span><output>30.08</output><span>Y:</span><output>29.98</output></div>
    <label for="zoom">Z:</label>
    <span class="spin zoom"><input id="zoom" type="text" value="1131%"><span class="steps"><button aria-label="Zoom in"><svg><use href="#up"/></svg></button><button aria-label="Zoom out"><svg><use href="#down"/></svg></button></span></span>
    <svg class="grip" viewBox="0 0 12 12"><path d="M10 1v10M7 5v6M4 8v3" stroke="#aaa" stroke-width="2" stroke-dasharray="2 2"/></svg>
  </footer>

  <script>
    const NS = 'http://www.w3.org/2000/svg';
    const PER_MM = 40.07;

    function add(parent, name, attrs, text) {
      const el = document.createElementNS(NS, name);
      for (const key in attrs) el.setAttribute(key, attrs[key]);
      if (text) el.textContent = text;
      parent.appendChild(el);
    }

    // horizontal ruler, a tick every 0.2 mm, numbers every 2 mm
    const rx = document.getElementById('ruler-x');
    const width = rx.getBoundingClientRect().width;
    let ticks = '';
    for (let i = 28; ; i++) {
      const x = Math.floor(-243.5 + i * PER_MM / 5) + 0.5;
      if (x < 19) continue;
      if (x > width) break;
      ticks += `M${x} ${i % 5 ? 9 : 3}V15`;
      if (i % 10 === 0 && x < width - 16) add(rx, 'text', { x: x + 1, y: 11 }, String(i / 5));
    }
    add(rx, 'path', { d: ticks + `M19 14.5H${width}` });
    add(rx, 'path', { class: 'mark', d: 'M955 9h8l-4 5z' });

    // vertical ruler, digits stacked
    const ry = document.getElementById('ruler-y');
    const height = ry.getBoundingClientRect().height;
    ticks = '';
    for (let i = 0; ; i++) {
      const y = Math.floor(2.5 + i * PER_MM / 5) + 0.5;
      if (y > height - 2) break;
      const len = i % 10 === 0 ? 12 : (i % 2 ? 4 : 6);
      ticks += `M16 ${y}h-${len}`;
      if (i % 10 === 0) {
        String(34 - i / 5).split('').forEach((d, n) => add(ry, 'text', { x: 3, y: y + 8 + n * 8 }, d));
      }
    }
    add(ry, 'path', { d: ticks + `M15.5 2V${height}` });
    add(ry, 'path', { class: 'mark', d: 'M10 158v10l5-5z' });

    // anchor buttons: which way the arms of each one point
    const arms = ['RD', 'LR', 'LD', 'UD', '', 'UD', 'RU', 'LR', 'LU'];
    const arm = { R: 'M16 11h5v2h-5z', L: 'M3 11h5v2H3z', D: 'M11 16h2v4h-2z', U: 'M11 4h2v4h-2z' };
    document.getElementById('anchors').innerHTML = arms.map((a, n) =>
      `<button aria-label="Anchor ${n + 1}"${n === 4 ? ' class="active"' : ''}><svg viewBox="0 0 24 24">` +
      `<path d="${[...a].map(k => arm[k]).join('')}" fill="#fff" stroke="#888"/>` +
      '<circle cx="12" cy="12" r="4" fill="#5cbb10" stroke="#3d8a08"/></svg></button>').join('');

    const colors = ('000000 1a1a1a 333333 4d4d4d 666666 808080 999999 b3b3b3 cccccc e6e6e6 ececec f2f2f2 f9f9f9 ffffff ' +
      '800000 ff0000 808000 ffff00 008000 00ff00 008080 00ffff 000080 0000ff 800080 ff00ff ' +
      '2b0000 550000 800000 aa0000 d40000 ff0000 ff2a2a ff5555 ff8080 ffaaaa ffd5d5 ' +
      '280b0b 501616 782121 a02c2c c83737 d35f5f de8787 e9afaf f4d7d7 241c1c 483737 6c5353 916f6f ac9393 c8b7b7 e3dbdb ' +
      '2b1100 552200 803300 aa4400 d45500 ff6600 ff7f2a ff9955 ffb380 ffccaa ffe6d5 ' +
      '28170b 502d16 784421 a05a2c c87137 d38d5f deaa87 e9c6af f4e3d7 241f1c 483e37 6c5d53 917c6f ac9d93 c8beb7 e3dedb ' +
      '2b2200 554400 806600 aa8800 d4aa00 ffcc00 ffd42a ffdd55 ffe680 ffeeaa fff6d5 ' +
      '28220b 504416 786721 a0892c c8ab37 d3bc5f decd87 e9ddaf f4eed7 24221c 484537 6c6753 918a6f aca793 c8c4b7 e3e2db ' +
      '222b00 445500 668000 88aa00 aad400 ccff00 d4ff2a ddff55 e5ff80 eeffaa f6ffd5 ' +
      '22280b 445016 677821 89a02c abc837 bcd35f cdde87 dde9af eef4d7 22241c 454837 676c53 8a916f a7ac93 c4c8b7 e2e3db ' +
      '112b00 225500').split(' ');
    document.getElementById('swatches').innerHTML =
      '<button class="none" aria-label="None"><svg viewBox="0 0 14 14"><path d="M0 0l14 14M14 0L0 14" stroke="#6a1010" stroke-width="1.5"/></svg></button>' +
      colors.map(c => `<button aria-label="#${c}" style="background:#${c}"></button>`).join('');
  </script>
</body>
</html>
```
FILE: styles.css
```css
* {
  box-sizing: border-box;
}

body {
  display: flex;
  flex-direction: column;
  height: 100vh;
  margin: 0;
  overflow: hidden;
  background: #efefef;
  color: #111;
  font-family: "Noto Sans", sans-serif;
  font-size: 12px;
  line-height: 16px;
}

h1, h2, h3, p {
  margin: 0;
  font-size: inherit;
  font-weight: normal;
}

button, input, select {
  margin: 0;
  padding: 0;
  border: 0;
  border-radius: 0;
  background: none;
  color: inherit;
  font: inherit;
}

svg {
  display: block;
  flex: none;
}

u {
  text-underline-offset: 2px;
}

.sprite {
  position: absolute;
  width: 0;
  height: 0;
}

.glyph {
  font: bold 24px "DejaVu Sans", sans-serif;
}

.glyph.small {
  font-size: 16px;
}

.glyph.serif {
  font: bold 22px "Liberation Serif", serif;
}

/* title bar */
.titlebar {
  position: relative;
  display: flex;
  flex: none;
  align-items: center;
  height: 21px;
  border-bottom: 1px solid #123;
  background: linear-gradient(90deg, #2f6198, #1b4c88 15%, #1d5490 50%, #1a4a80 75%, #153d6c 85%, #2c5c92 95%, #6a8cb0);
}

.desktop {
  position: absolute;
  top: 0;
  left: 0;
  width: 100%;
  height: 20px;
  overflow: hidden;
}

.blurred {
  fill: #a9c9c4;
  filter: blur(3px);
}

.blurred rect {
  fill: #a3bbd6;
}

.dim {
  fill: #30506c;
  filter: blur(3px);
}

.logo {
  position: relative;
  width: 16px;
  height: 18px;
}

.titlebar h1 {
  position: relative;
  flex: 1;
  margin-left: 5px;
  padding-top: 1px;
}

.win-buttons {
  position: relative;
  display: flex;
  align-self: flex-start;
  margin-right: 3px;
  border: 1px solid #1c2c44;
  border-top: 0;
  border-radius: 0 0 4px 4px;
  overflow: hidden;
}

.win-buttons button {
  display: flex;
  align-items: center;
  justify-content: center;
  width: 28px;
  height: 17px;
  border-right: 1px solid #24405f;
  background: linear-gradient(#a9bacd, #7b93ad 45%, #4b6785 50%, #7592b0);
}

.win-buttons .win-close {
  width: 47px;
  border: 0;
  background: linear-gradient(#e0a08f, #cc6350 45%, #b02c14 50%, #cf5c3c);
}

.win-buttons svg {
  width: 16px;
  height: 12px;
}

/* menu and tool controls */
.menubar {
  display: flex;
  flex: none;
  gap: 13px;
  height: 21px;
  padding: 4px 8px 0;
  border-bottom: 1px solid #b4bbcd;
  background: linear-gradient(#fff, #e9edf7 35%, #d4daec 36%, #dfe4f4);
}

.menubar a {
  color: #111;
  text-decoration: none;
}

.toolbar {
  display: flex;
  flex: none;
  align-items: center;
  height: 36px;
  padding-left: 2px;
  border-bottom: 1px solid #b4bbcd;
  background: linear-gradient(#fff, #e9edf7 25%, #d3daec 26%, #e0e5f5);
  font-size: 11px;
}

.toolbar > button {
  display: flex;
  align-items: center;
  justify-content: center;
  width: 26px;
  height: 30px;
}

.toolbar > button svg {
  width: 22px;
  height: 22px;
}

.toolbar .drop {
  width: 25px;
}

.active {
  border: 1px solid #555b6b;
  border-radius: 3px;
  background: linear-gradient(#a5abbb, #c6cbd9 30%, #ced3e2);
}

.sep {
  width: 2px;
  height: 28px;
  margin: 0 5px;
  border-left: 1px solid #a3a8b5;
  border-right: 1px solid #fff;
}

.toolbar label {
  width: 23px;
  padding-left: 8px;
}

.toolbar .spin {
  width: 56px;
  height: 22px;
}

.toolbar .unit {
  width: 45px;
  height: 20px;
}

.spin {
  display: inline-flex;
  height: 24px;
}

.spin input {
  flex: 1;
  min-width: 0;
  padding: 0 3px;
  border: 1px solid #989898;
  border-right: 0;
  background: #fff;
}

.steps {
  display: flex;
  flex-direction: column;
  flex: none;
  width: 12px;
  padding-left: 1px;
  background: #fff;
}

.steps button {
  display: flex;
  flex: 1;
  align-items: center;
  justify-content: center;
  min-height: 0;
  border: 1px solid #b0b0b4;
  background: linear-gradient(#fff, #e4e4e4);
  color: #4a5da8;
}

.steps .off {
  color: #999;
}

.steps svg {
  width: 7px;
  height: 7px;
}

.combo {
  position: relative;
  display: inline-flex;
  height: 24px;
}

.combo select {
  width: 100%;
  padding-left: 3px;
  border: 1px solid #989898;
  background: #fff;
  appearance: none;
}

/* drop-down arrow over the right end of the select */
.combo i {
  position: absolute;
  top: 0;
  right: 0;
  bottom: 0;
  display: flex;
  align-items: center;
  justify-content: center;
  width: 18px;
  border: 1px solid #555;
  background: linear-gradient(#fafafa, #d6d6d6);
  pointer-events: none;
}

.combo i::before {
  border: 4px solid transparent;
  border-top: 5px solid #000;
  border-bottom: 0;
  content: "";
}

.combo.line::before {
  position: absolute;
  top: 11px;
  left: 2px;
  width: 14px;
  height: 2px;
  background: #333;
  content: "";
}

.combo.long::before {
  left: 4px;
  width: 80px;
  background: #000;
}

/* work area */
.workspace {
  display: flex;
  flex: 1;
  min-height: 0;
}

.toolbox {
  display: flex;
  flex: none;
  flex-direction: column;
  gap: 2px;
  width: 34px;
  padding: 3px 2px;
  border-right: 1px solid #f6f6f6;
  background: linear-gradient(#fff, #d4daec 20px, #d4daec 880px, #e4e8f6);
}

.toolbox button {
  display: flex;
  flex: none;
  align-items: center;
  justify-content: center;
  width: 30px;
  height: 28px;
}

.toolbox svg, .sidebar svg {
  overflow: visible;
}

.toolbox svg {
  width: 24px;
  height: 24px;
}

.editor {
  display: grid;
  flex: 1;
  grid-template-columns: 17px 1fr 16px;
  grid-template-rows: 15px 1fr 16px;
  min-width: 0;
}

.ruler {
  width: 100%;
  height: 100%;
  overflow: hidden;
  fill: #222;
  font-size: 10px;
  shape-rendering: crispEdges;
}

.ruler-y {
  font-size: 9px;
}

.ruler path {
  fill: none;
  stroke: #000;
}

.ruler .mark {
  fill: #000;
  stroke: none;
}

.ruler-x {
  grid-column: 1 / 3;
}

.canvas {
  width: 100%;
  height: 100%;
  overflow: hidden;
  background: #fff;
}

.guide {
  stroke: #8080cc;
}

.corner {
  display: flex;
  align-items: center;
  justify-content: center;
}

.corner svg {
  width: 11px;
  height: 11px;
}

.vscroll {
  display: flex;
  flex-direction: column;
  align-items: center;
  justify-content: space-between;
  padding: 5px 0;
  background: #ececec;
}

.vscroll svg, .hscroll svg {
  width: 8px;
  height: 8px;
  color: #222;
}

.vscroll .thumb {
  width: 15px;
  height: 20px;
  margin-top: 241px;
  border: 1px solid #888;
  border-radius: 2px;
  background: repeating-linear-gradient(#555 0 1px, transparent 1px 3px) center / 7px 9px no-repeat, linear-gradient(90deg, #fafafa, #d0d0d0);
}

.hscroll {
  display: flex;
  grid-column: 2;
  align-items: center;
  padding: 0 5px;
  background: #ececec;
}

.hscroll .thumb {
  width: 34px;
  height: 14px;
  margin: 0 auto 0 33.6%;
  border: 1px solid #888;
  border-radius: 2px;
  background: repeating-linear-gradient(90deg, #666 0 1px, transparent 1px 3px) center / 8px 7px no-repeat, linear-gradient(#fafafa, #cfcfcf);
}

/* docked dialogs */
.dock {
  flex: none;
  width: 296px;
  margin-left: 6px;
  padding-right: 2px;
  border-top: 1px solid #000;
  border-left: 2px solid #000;
}

.panel header {
  display: flex;
  align-items: center;
  height: 24px;
  border-bottom: 1px solid #888;
}

.panel header > svg {
  width: 13px;
  height: 15px;
}

.panel h2 {
  flex: 1;
  padding-left: 1px;
}

.panel header button {
  margin-right: 10px;
}

.panel header button:last-child {
  margin-right: 5px;
}

.panel header button svg {
  width: 12px;
  height: 12px;
}

.panel-body {
  padding: 4px 5px 6px;
  border-bottom: 1px solid #fff;
}

.panel + .panel header {
  height: 28px;
  padding-top: 5px;
}

.tabs {
  display: flex;
  align-items: flex-end;
  height: 26px;
  margin-bottom: -1px;
}

.tabs button {
  display: flex;
  align-items: center;
  height: 23px;
  padding: 0 5px;
  border: 1px solid #888;
  border-left-width: 0;
  background: linear-gradient(#f6f6f6, #dcdcdc 60%, #d2d2d2);
}

.tabs button:first-child {
  border-left-width: 1px;
}

.tabs .current {
  height: 26px;
  padding: 1px 6px 0;
  border-bottom-color: #fff;
  background: #fff;
}

.stroke-tabs {
  padding-left: 2px;
}

.stroke-tabs button {
  gap: 5px;
  padding: 0 4px 0 2px;
}

.stroke-tabs .current {
  padding: 1px 7px 0 4px;
}

.fill-chip, .paint-chip {
  width: 9px;
  height: 10px;
  background: linear-gradient(135deg, #88aede, #fff);
}

.paint-chip {
  border: 1px solid #777;
  background: linear-gradient(135deg, #ccc, #fff);
}

.stroke-tabs svg {
  width: 10px;
  height: 10px;
}

.sheet {
  border: 1px solid #888;
  background: #fff;
}

.stroke-style {
  display: grid;
  grid-template-columns: 89px 1fr;
  grid-template-rows: 24px 32px 24px 32px 24px 22px;
  align-content: start;
  align-items: center;
  row-gap: 5px;
  column-gap: 4px;
  height: 293px;
  padding-top: 8px;
}

.stroke-style > label, .name {
  text-align: right;
}

.row {
  display: flex;
  gap: 4px;
}

.row.tight {
  gap: 0;
}

.shapes {
  gap: 6px;
  padding-left: 1px;
}

.shapes button {
  display: flex;
  align-items: flex-end;
  justify-content: center;
  width: 32px;
  height: 32px;
  padding-bottom: 3px;
  border: 1px solid #777;
  border-radius: 3px;
  background: linear-gradient(#fafafa, #d6d6d6);
}

.shapes .on {
  border-color: #2c5a7c;
  background: linear-gradient(#e8f4fc, #b8dcf0 50%, #60aed8);
}

.shapes svg {
  width: 24px;
  height: 24px;
}

.w64 {
  width: 76px;
}

.w50 {
  width: 62px;
}

.w43 {
  width: 55px;
}

.w53 {
  width: 53px;
}

.w106 {
  width: 106px;
}

.markers .combo {
  width: 57px;
}

.slider {
  display: flex;
  position: relative;
  height: 25px;
  margin-top: 4px;
}

/* the label sits inside the slider's entry */
.slider label {
  position: absolute;
  top: 4px;
  left: 6px;
}

.slider input {
  padding-right: 4px;
  text-align: right;
}

.slider.full input {
  box-shadow: inset 0 0 0 1px #fff, inset -1px -1px 0 2px #333;
  background: #b5c3cf;
}

.nodes {
  height: 66px;
  padding-top: 5px;
}

.nodes h3 {
  padding-left: 5px;
  font-weight: 500;
}

.node-buttons {
  display: flex;
  justify-content: flex-end;
  gap: 11px;
  padding: 8px 5px 0 0;
}

.node-buttons svg {
  width: 24px;
  height: 24px;
}

.arrange {
  display: flex;
  flex-direction: column;
}

.arrange .sheet {
  height: 296px;
  padding: 6px 3px 5px;
}

.counts {
  display: grid;
  grid-template-columns: 94px 23px 89px;
  grid-template-rows: 16px 24px 20px;
  row-gap: 4px;
  text-align: center;
}

.times {
  font-size: 11px;
}

.choice {
  display: flex;
  align-items: center;
  gap: 6px;
  text-align: left;
}

.choice input {
  width: 13px;
  height: 13px;
  margin-left: 2px;
  border: 1px solid #8a8a8a;
  background: linear-gradient(135deg, #ddd, #fff);
  appearance: none;
}

.choice input[type="checkbox"]:checked::before {
  display: block;
  width: 5px;
  height: 9px;
  margin-left: 3px;
  border: solid #40549c;
  border-width: 0 2px 2px 0;
  transform: rotate(40deg);
  content: "";
}

.choice input[type="radio"] {
  width: 12px;
  height: 12px;
  margin-left: 0;
  border-radius: 50%;
}

.choice input[type="radio"]:checked {
  background: radial-gradient(circle at 50% 45%, #7cc4ee 0 1px, #16507e 3px 4px, #eee 5px);
}

.alignment {
  margin: 7px 0 1px;
}

.anchors {
  display: grid;
  grid-template-columns: repeat(3, 26px);
  gap: 3px;
  justify-content: center;
  margin-bottom: 1px;
}

.anchors button {
  display: flex;
  align-items: center;
  justify-content: center;
  height: 26px;
}

.anchors .active {
  background: linear-gradient(#d4d4d4, #f0f0f0);
}

.anchors svg {
  width: 24px;
  height: 24px;
}

.radio {
  height: 25px;
}

.spacing {
  display: grid;
  grid-template-columns: 24px 21px 104px 53px;
  column-gap: 4px;
  row-gap: 2px;
  align-items: center;
  margin-top: 6px;
}

.spacing > svg {
  justify-self: center;
  width: 22px;
  height: 22px;
}

.spacing .combo {
  height: 22px;
  margin-left: 4px;
}

.push {
  align-self: flex-end;
  width: 83px;
  height: 25px;
  margin: 5px 5px 2px;
  border: 1px solid #666;
  border-radius: 3px;
  background: linear-gradient(#fcfcfc, #e6e6e6 50%, #d4d4d4 51%, #d8d8d8);
}

/* command and snap bars */
.sidebar {
  display: flex;
  flex: none;
  flex-direction: column;
  align-items: center;
  width: 31px;
  padding-top: 2px;
  border-right: 2px solid #eef1fa;
  background: linear-gradient(#fff, #d4daec 20px, #d4daec 880px, #e4e8f6);
}

.sidebar hr {
  width: 16px;
  height: 2px;
  margin: 5px 0;
  border: 0;
  border-top: 1px solid #a8adba;
  border-bottom: 1px solid #fff;
}

.sidebar button {
  display: flex;
  flex: none;
  align-items: center;
  justify-content: center;
  width: 26px;
  height: 24px;
  margin: 1px 0;
}

.sidebar button svg {
  width: 24px;
  height: 24px;
}

.snapbar {
  width: 30px;
  border-right-width: 1px;
}

/* palette */
.palette {
  display: flex;
  flex: none;
  height: 18px;
  border-top: 2px solid #000;
  border-bottom: 2px solid #fff;
}

.swatches {
  display: flex;
  flex: none;
  width: 1909px;
  max-width: calc(100% - 11px);
  padding-left: 2px;
  overflow: hidden;
}

.swatches button {
  flex: none;
  width: 14px;
  height: 14px;
}

.none {
  background: #fff;
}

.palette-menu svg {
  width: 9px;
  height: 9px;
}

.palette-scroll {
  flex: none;
  height: 15px;
  margin: 1px 0;
  padding: 0 14px 0 4px;
}

.palette-scroll .thumb {
  width: 31%;
  margin-left: 6px;
}

/* status bar */
.statusbar {
  display: flex;
  flex: none;
  align-items: center;
  height: 30px;
  padding-left: 2px;
  border-bottom: 2px solid #3c5878;
  font-size: 11px;
}

.style-now {
  display: grid;
  grid-template-columns: 40px 62px 18px;
  grid-template-rows: 14px 14px;
  column-gap: 2px;
  line-height: 14px;
}

.style-now em {
  padding-left: 18px;
  text-align: center;
}

.ink {
  margin-top: 1px;
  background: #000;
}

.statusbar > label {
  width: 14px;
}

.statusbar .spin {
  width: 47px;
  height: 23px;
}

.bar {
  width: 1px;
  height: 28px;
  margin: 0 2px;
  background: #999;
}

.statusbar > button svg {
  width: 12px;
  height: 12px;
  margin: 0 2px;
}

.statusbar .layer {
  width: 71px;
  height: 28px;
}

.statusbar p {
  flex: 1;
  padding-left: 5px;
  font-size: 12px;
}

.coords {
  display: grid;
  grid-template-columns: 20px 42px;
  padding-left: 4px;
  border-left: 1px solid #999;
  font-size: 12px;
  line-height: 14px;
}

.coords output {
  font-family: "Liberation Mono", monospace;
  text-align: right;
}

.coords + label {
  margin-left: 8px;
}

.statusbar .zoom {
  width: 57px;
  height: 22px;
}

.grip {
  align-self: flex-end;
  width: 12px;
  height: 12px;
  margin-left: 7px;
}
```
